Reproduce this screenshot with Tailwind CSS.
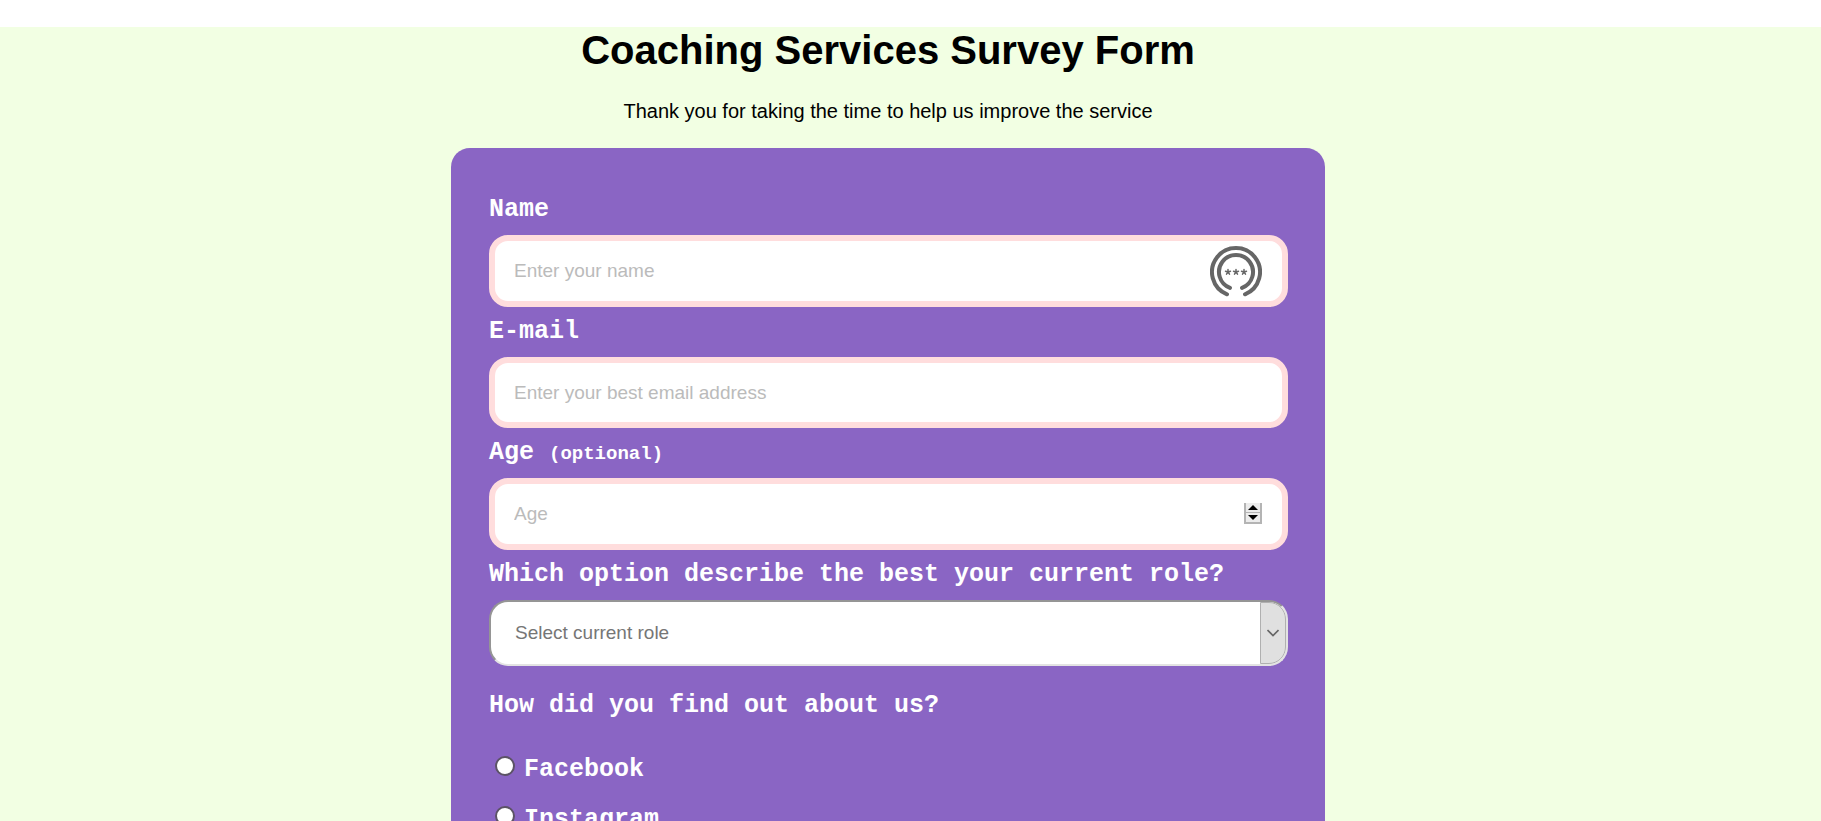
<!DOCTYPE html>
<html lang="en">
<head>
<meta charset="utf-8">
<meta name="viewport" content="width=device-width, initial-scale=1">
<title>Coaching Services Survey Form</title>
<script src="https://cdn.jsdelivr.net/npm/@tailwindcss/browser@4"></script>
</head>
<body class="bg-white pt-[27px] font-['Liberation_Sans',Arial,sans-serif] text-black">
<div class="min-h-screen bg-[#f2ffe3] pr-[45px] pb-12">
  <header class="text-center">
    <h1 class="text-[40px] leading-[46px] font-bold">Coaching Services Survey Form</h1>
    <p class="mt-6 text-[20px] leading-7">Thank you for taking the time to help us improve the service</p>
  </header>
  <form class="mx-auto mt-[23px] w-[874px] max-w-full rounded-[19px] bg-[#8a65c4] pr-[37px] pl-[38px] pt-12 pb-12 font-['Liberation_Mono','Courier_New',monospace] text-[25px] leading-7 font-bold text-white">
    <label for="name" class="block">Name</label>
    <div class="relative mt-[11px] font-['Liberation_Sans',Arial,sans-serif]">
      <input id="name" type="text" placeholder="Enter your name" class="block h-[72px] w-full rounded-[19px] border-6 border-[#ffdddd] bg-white px-[19px] text-[19px] font-normal text-black placeholder:text-[#bbbbbb]">
      <button type="button" aria-label="Fill from password manager" class="absolute top-[11px] right-[26px]">
        <svg class="block size-[52px]" viewBox="-26 -26 52 52" fill="none" stroke="#666" stroke-width="4" stroke-linecap="round">
          <path d="M-9 22.3A24 24 0 1 1 9 22.3M-6 15.9A17 17 0 1 1 6 15.9"/>
          <path stroke-width="1.5" d="M-8 0V-2.6M-8 0L-5.5 -.8M-8 0L-6.5 2.1M-8 0L-9.5 2.1M-8 0L-10.5 -.8M0 0V-2.6M0 0L2.5 -.8M0 0L1.5 2.1M0 0L-1.5 2.1M0 0L-2.5 -.8M8 0V-2.6M8 0L10.5 -.8M8 0L9.5 2.1M8 0L6.5 2.1M8 0L5.5 -.8"/>
        </svg>
      </button>
    </div>
    <label for="email" class="mt-[11px] block">E-mail</label>
    <div class="mt-[11px] font-['Liberation_Sans',Arial,sans-serif]">
      <input id="email" type="email" placeholder="Enter your best email address" class="block h-[71px] w-full rounded-[19px] border-6 border-[#ffdddd] bg-white px-[19px] text-[19px] font-normal text-black placeholder:text-[#bbbbbb]">
    </div>
    <label for="age" class="mt-[11px] block">Age <span class="text-[19px] leading-none">(optional)</span></label>
    <div class="relative mt-[11px] font-['Liberation_Sans',Arial,sans-serif]">
      <input id="age" type="number" placeholder="Age" class="block h-[72px] w-full appearance-none rounded-[19px] border-6 border-[#ffdddd] bg-white px-[19px] text-[19px] font-normal text-black [appearance:textfield] placeholder:text-[#bbbbbb]">
      <div class="absolute top-[25px] right-[26px] flex w-[18px] flex-col border-2 border-t-0 border-[#b4b4b4] bg-[#ececec]">
        <button type="button" aria-label="Increase age" class="flex h-[10px] items-center justify-center border-b border-[#b4b4b4]" onclick="this.form.age.stepUp()"><svg class="block h-[5px] w-[10px]" viewBox="0 0 10 5"><path d="M0 5L5 0L10 5Z"/></svg></button>
        <button type="button" aria-label="Decrease age" class="flex h-[9px] items-center justify-center" onclick="this.form.age.stepDown()"><svg class="block h-[5px] w-[10px]" viewBox="0 0 10 5"><path d="M0 0L5 5L10 0Z"/></svg></button>
      </div>
    </div>
    <label for="role" class="mt-[11px] block">Which option describe the best your current role?</label>
    <div class="relative mt-[11px] font-['Liberation_Sans',Arial,sans-serif]">
      <select id="role" class="block h-[66px] w-full appearance-none rounded-[19px] border-2 border-t-[#959595] border-r-[#e3e3e3] border-b-[#e3e3e3] border-l-[#959595] bg-white px-6 text-[19px] font-normal text-[#767676]">
        <option>Select current role</option>
        <option>Student</option>
        <option>Full Time Job</option>
        <option>Other</option>
      </select>
      <span class="pointer-events-none absolute top-[2px] right-[2px] flex h-[62px] w-[26px] items-center justify-center rounded-r-[17px] border border-[#b0b0b0] bg-[#e0e0e0]">
        <svg class="h-2 w-3" viewBox="0 0 12 8" fill="none" stroke="#666" stroke-width="1.6"><path d="M.5 1L6 6.5L11.5 1"/></svg>
      </span>
    </div>
    <fieldset class="mt-[26px]">
      <legend>How did you find out about us?</legend>
      <div class="mt-9 flex flex-col gap-[22px] pl-[6px]">
        <label class="flex items-start gap-[9px]"><input type="radio" name="source" value="facebook" class="size-5 appearance-none rounded-full border-2 border-[#5c5366] bg-white checked:bg-[#5c5366]">Facebook</label>
        <label class="flex items-start gap-[9px]"><input type="radio" name="source" value="instagram" class="size-5 appearance-none rounded-full border-2 border-[#5c5366] bg-white checked:bg-[#5c5366]">Instagram</label>
      </div>
    </fieldset>
  </form>
</div>
</body>
</html>
